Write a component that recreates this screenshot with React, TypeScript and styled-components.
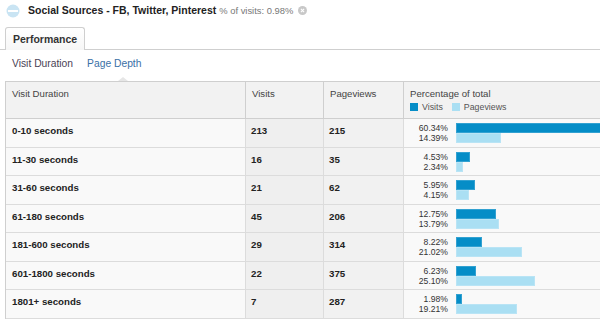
import { createGlobalStyle, styled } from "styled-components";

const rows = [
  { label: "0-10 seconds", visits: 213, pageviews: 215, vp: 60.34, pp: 14.39 },
  { label: "11-30 seconds", visits: 16, pageviews: 35, vp: 4.53, pp: 2.34 },
  { label: "31-60 seconds", visits: 21, pageviews: 62, vp: 5.95, pp: 4.15 },
  { label: "61-180 seconds", visits: 45, pageviews: 206, vp: 12.75, pp: 13.79 },
  { label: "181-600 seconds", visits: 29, pageviews: 314, vp: 8.22, pp: 21.02 },
  { label: "601-1800 seconds", visits: 22, pageviews: 375, vp: 6.23, pp: 25.1 },
  { label: "1801+ seconds", visits: 7, pageviews: 287, vp: 1.98, pp: 19.21 },
];

const SCALE = 3.15; // px per percent

const App = () => {
  return (
    <Page>
      <GlobalStyle />
      <TitleBar>
        <SegmentIcon width="14" height="14" viewBox="0 0 14 14">
          <circle cx="7" cy="7" r="6.5" fill="#c9e4f3" />
          <rect x="2" y="6" width="10" height="2" fill="#fff" />
        </SegmentIcon>
        <Title>Social Sources - FB, Twitter, Pinterest</Title>
        <Meta>% of visits: 0.98%</Meta>
        <CloseIcon width="9" height="9" viewBox="0 0 9 9">
          <circle cx="4.5" cy="4.5" r="4.5" fill="#c8c8c8" />
          <path d="M2.9 2.9 L6.1 6.1 M6.1 2.9 L2.9 6.1" stroke="#fff" strokeWidth="1.1" />
        </CloseIcon>
      </TitleBar>

      <TabBar>
        <Tab>Performance</Tab>
      </TabBar>

      <SubNav>
        <NavItem>Visit Duration</NavItem>
        <NavItem $link>Page Depth</NavItem>
        <Caret />
      </SubNav>

      <Table>
        <HeadCell>Visit Duration</HeadCell>
        <HeadCell>Visits</HeadCell>
        <HeadCell>Pageviews</HeadCell>
        <HeadCell $last>
          Percentage of total
          <Legend>
            <LegendItem>
              <Swatch $color="#058dc7" />
              Visits
            </LegendItem>
            <LegendItem>
              <Swatch $color="#aadff3" />
              Pageviews
            </LegendItem>
          </Legend>
        </HeadCell>

        {rows.map((r) => (
          <Row key={r.label}>
            <LabelCell>{r.label}</LabelCell>
            <NumCell $bg="#efefef">{r.visits}</NumCell>
            <NumCell $bg="#f1f1f1">{r.pageviews}</NumCell>
            <PctCell>
              <PctLabels>
                <span>{r.vp.toFixed(2)}%</span>
                <span>{r.pp.toFixed(2)}%</span>
              </PctLabels>
              <Bars>
                <Bar $color="#058dc7" style={{ width: r.vp * SCALE }} />
                <Bar $color="#aadff3" style={{ width: r.pp * SCALE }} />
              </Bars>
            </PctCell>
          </Row>
        ))}
      </Table>
    </Page>
  );
};

export default App;

const GlobalStyle = createGlobalStyle`
  html, body {
    margin: 0;
    padding: 0;
    background: #fff;
    overflow: hidden;
  }
  body {
    font-family: "Liberation Sans", Arial, sans-serif;
    color: #333;
  }
`;

const Page = styled.div`
  width: 600px;
  height: 326px;
  overflow: hidden;
`;

const TitleBar = styled.div`
  display: flex;
  align-items: center;
  height: 18px;
  padding-left: 6px;
  padding-top: 1px;
`;

const SegmentIcon = styled.svg`
  flex-shrink: 0;
  margin-right: 8px;
  margin-top: 1px;
`;

const Title = styled.span`
  font-size: 10.5px;
  font-weight: 700;
  color: #222;
  white-space: nowrap;
`;

const Meta = styled.span`
  margin-left: 3px;
  font-size: 9.4px;
  color: #777;
  white-space: nowrap;
`;

const CloseIcon = styled.svg`
  margin-left: 5px;
  flex-shrink: 0;
`;

const TabBar = styled.div`
  display: flex;
  margin-top: 8px;
  padding-left: 5px;
  height: 22px;
  border-bottom: 1px solid #cfcfcf;
`;

const Tab = styled.div`
  box-sizing: border-box;
  width: 80px;
  height: 23px;
  padding-left: 7px;
  line-height: 22px;
  border: 1px solid #cfcfcf;
  border-bottom: none;
  border-radius: 3px 3px 0 0;
  background: linear-gradient(#ffffff, #f6f6f6);
  font-size: 10.5px;
  font-weight: 700;
  color: #333;
`;

const SubNav = styled.div`
  position: relative;
  display: flex;
  gap: 14px;
  height: 31px;
  padding-left: 12px;
  box-sizing: border-box;
  padding-top: 8px;
`;

const NavItem = styled.span<{ $link?: boolean }>`
  font-size: 10.3px;
  line-height: 12px;
  color: ${(p) => (p.$link ? "#3a70a6" : "#4a3f55")};
`;

const Caret = styled.div`
  position: absolute;
  left: 118px;
  bottom: 0;
  width: 0;
  height: 0;
  border-left: 5px solid transparent;
  border-right: 5px solid transparent;
  border-bottom: 4px solid #e6e6e6;
`;

const Table = styled.div`
  display: grid;
  grid-template-columns: 240px 78px 80px 200px;
  border-top: 1px solid #cfcfcf;
  border-left: 1px solid #cfcfcf;
  margin-left: 5px;
  width: 600px;
`;

const HeadCell = styled.div<{ $last?: boolean }>`
  box-sizing: border-box;
  height: 37px;
  padding: 6px 6px 0 6px;
  line-height: 12px;
  font-size: 9.6px;
  color: #444;
  background: #f2f2f2;
  border-bottom: 1px solid #cfcfcf;
  border-right: ${(p) => (p.$last ? "none" : "1px solid #cfcfcf")};
`;

const Legend = styled.div`
  display: flex;
  gap: 9px;
  margin-top: 1px;
  font-size: 8.8px;
  color: #555;
`;

const LegendItem = styled.span`
  display: flex;
  align-items: center;
  gap: 4px;
`;

const Swatch = styled.span<{ $color: string }>`
  display: inline-block;
  width: 8px;
  height: 8px;
  background: ${(p) => p.$color};
`;

const Row = styled.div`
  display: contents;
`;

const BodyCell = styled.div`
  box-sizing: border-box;
  height: 28.5px;
  border-bottom: 1px solid #dcdcdc;
  border-right: 1px solid #dcdcdc;
`;

const LabelCell = styled(BodyCell)`
  padding: 6px 6px 0 6px;
  font-size: 9.7px;
  line-height: 12px;
  font-weight: 700;
  color: #222;
  background: #f9f9f9;
`;

const NumCell = styled(BodyCell)<{ $bg: string }>`
  padding: 6px 5px 0 5px;
  font-size: 9.7px;
  line-height: 12px;
  font-weight: 700;
  color: #222;
  background: ${(p) => p.$bg};
`;

const PctCell = styled(BodyCell)`
  display: flex;
  gap: 8px;
  padding-top: 4px;
  border-right: none;
  background: #f9f9f9;
  overflow: hidden;
`;

const PctLabels = styled.div`
  width: 44px;
  flex-shrink: 0;
  display: flex;
  flex-direction: column;
  align-items: flex-end;
  font-size: 8.6px;
  line-height: 10px;
  color: #333;
`;

const Bars = styled.div`
  display: flex;
  flex-direction: column;
`;

const Bar = styled.div<{ $color: string }>`
  height: 10px;
  background: ${(p) => p.$color};
  box-shadow: inset 0 0 0 1px rgba(255, 255, 255, 0.18);
`;
